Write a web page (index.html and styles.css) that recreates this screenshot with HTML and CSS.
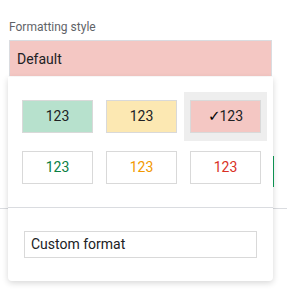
FILE: index.html
```html
<!DOCTYPE html>
<html lang="en">
<head>
  <meta charset="UTF-8">
  <title>Formatting style</title>
  <link rel="stylesheet" href="styles.css">
</head>
<body>

<div class="panel">
  <label class="field-label">Formatting style</label>

  <div class="select-box">
    <span class="select-value">Default</span>

    <div class="dropdown">
      <div class="preset-grid">
        <div class="preset"><div class="swatch fill-green">123</div></div>
        <div class="preset"><div class="swatch fill-yellow">123</div></div>
        <div class="preset selected"><div class="swatch fill-red"><span class="check">✓</span>123</div></div>
        <div class="preset"><div class="swatch text-green">123</div></div>
        <div class="preset"><div class="swatch text-orange">123</div></div>
        <div class="preset"><div class="swatch text-red">123</div></div>
      </div>

      <div class="divider"></div>

      <div class="custom-format">Custom format</div>
    </div>
  </div>

  <div class="actions">
    <!-- label sits under the open dropdown -->
    <button class="done-btn" aria-label="Done"></button>
  </div>
</div>

<div class="rule"></div>

</body>
</html>
```

FILE: styles.css
```css
* { box-sizing: border-box; }
body {
  margin: 0;
  min-height: 307px;
  font-family: Roboto, 'Liberation Sans', sans-serif;
  background: #ffffff;
  color: #202124;
}
.panel {
  padding: 19px 15px 0 9px;
}
.field-label {
  display: block;
  font-size: 12px;
  line-height: 16px;
  color: #5f6368;
}
.select-box {
  position: relative;
  margin-top: 5px;
  height: 36px;
  background-color: #f4c7c3;
  border: 1px solid #dadce0;
  border-bottom: none;
  padding-left: 7px;
}
.select-value {
  font-size: 14px;
  line-height: 36px;
  color: #202124;
}
.dropdown {
  position: absolute;
  top: 36px;
  left: -2px;
  width: 265px;
  z-index: 5;
  background: #ffffff;
  border-radius: 0 0 4px 4px;
  box-shadow: 0 2px 6px rgba(0,0,0,0.16);
  padding: 15px 0 23px;
}
.preset-grid {
  display: grid;
  grid-template-columns: repeat(3, 83px);
  column-gap: 1px;
  row-gap: 2px;
  padding-left: 8px;
}
.preset {
  padding: 8px 6px;
}
.preset.selected { background-color: #eeeeee; }
.swatch {
  height: 33px;
  border: 1px solid #d9d9d9;
  background: #ffffff;
  font-size: 14px;
  line-height: 31px;
  text-align: center;
}
.fill-green { background-color: #b7e1cd; }
.fill-yellow { background-color: #fce8b2; }
.fill-red { background-color: #f4c7c3; }
.text-green { color: #0b8043; }
.text-orange { color: #f29900; }
.text-red { color: #d93025; }
.check {
  font-family: 'DejaVu Sans', sans-serif;
  font-size: 15px;
  margin-right: -1px;
  color: #000;
}
.divider {
  margin-top: 15px;
  height: 1px;
  background-color: #dadce0;
}
.custom-format {
  margin: 23px 16px 0;
  height: 27px;
  border: 1px solid #d9d9d9;
  padding-left: 6px;
  font-size: 14px;
  line-height: 25px;
  color: #202124;
}
.actions {
  display: flex;
  justify-content: flex-end;
  margin-top: 80px;
  margin-right: -2px;
}
.done-btn {
  width: 60px;
  height: 31px;
  background-color: #0f9d58;
  border: none;
  border-radius: 0;
}
.rule {
  margin-top: 21px;
  height: 1px;
  background-color: #dadce0;
}
```
